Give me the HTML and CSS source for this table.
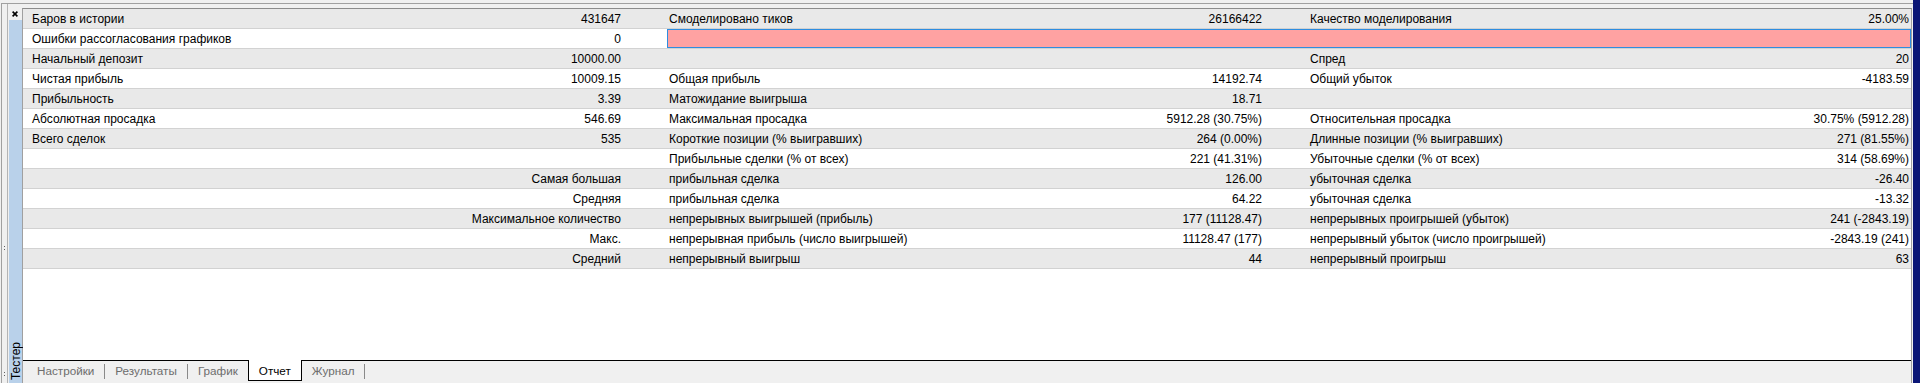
FILE: index.html
```html
<!DOCTYPE html>
<html lang="ru">
<head>
<meta charset="utf-8">
<title>Тестер — Отчет</title>
<link rel="stylesheet" href="styles.css">
</head>
<body>
<div class="app">
  <div class="panel">
    <div class="grip">
      <span class="dots dots-mid"></span>
      <span class="dots dots-low"></span>
    </div>
    <div class="side">
      <div class="close">
        <svg width="6" height="6" viewBox="0 0 6 6"><path d="M0.6 0.6L5.4 5.4M5.4 0.6L0.6 5.4" stroke="#000" stroke-width="1.6" fill="none"/></svg>
      </div>
      <div class="strip"><span class="strip-label">Тестер</span></div>
    </div>
    <div class="main">
      <div class="report">
        <div class="row alt">
          <span class="c a">Баров в истории</span><span class="c b">431647</span>
          <span class="c l2">Смоделировано тиков</span><span class="c v2">26166422</span>
          <span class="c l3">Качество моделирования</span><span class="c v3">25.00%</span>
        </div>
        <div class="row">
          <span class="c a">Ошибки рассогласования графиков</span><span class="c b">0</span>
          <span class="pink"></span>
        </div>
        <div class="row alt">
          <span class="c a">Начальный депозит</span><span class="c b">10000.00</span>
          <span class="c l3">Спред</span><span class="c v3">20</span>
        </div>
        <div class="row">
          <span class="c a">Чистая прибыль</span><span class="c b">10009.15</span>
          <span class="c l2">Общая прибыль</span><span class="c v2">14192.74</span>
          <span class="c l3">Общий убыток</span><span class="c v3">-4183.59</span>
        </div>
        <div class="row alt">
          <span class="c a">Прибыльность</span><span class="c b">3.39</span>
          <span class="c l2">Матожидание выигрыша</span><span class="c v2">18.71</span>
        </div>
        <div class="row">
          <span class="c a">Абсолютная просадка</span><span class="c b">546.69</span>
          <span class="c l2">Максимальная просадка</span><span class="c v2">5912.28 (30.75%)</span>
          <span class="c l3">Относительная просадка</span><span class="c v3">30.75% (5912.28)</span>
        </div>
        <div class="row alt">
          <span class="c a">Всего сделок</span><span class="c b">535</span>
          <span class="c l2">Короткие позиции (% выигравших)</span><span class="c v2">264 (0.00%)</span>
          <span class="c l3">Длинные позиции (% выигравших)</span><span class="c v3">271 (81.55%)</span>
        </div>
        <div class="row">
          <span class="c l2">Прибыльные сделки (% от всех)</span><span class="c v2">221 (41.31%)</span>
          <span class="c l3">Убыточные сделки (% от всех)</span><span class="c v3">314 (58.69%)</span>
        </div>
        <div class="row alt">
          <span class="c b">Самая большая</span>
          <span class="c l2">прибыльная сделка</span><span class="c v2">126.00</span>
          <span class="c l3">убыточная сделка</span><span class="c v3">-26.40</span>
        </div>
        <div class="row">
          <span class="c b">Средняя</span>
          <span class="c l2">прибыльная сделка</span><span class="c v2">64.22</span>
          <span class="c l3">убыточная сделка</span><span class="c v3">-13.32</span>
        </div>
        <div class="row alt">
          <span class="c b">Максимальное количество</span>
          <span class="c l2">непрерывных выигрышей (прибыль)</span><span class="c v2">177 (11128.47)</span>
          <span class="c l3">непрерывных проигрышей (убыток)</span><span class="c v3">241 (-2843.19)</span>
        </div>
        <div class="row">
          <span class="c b">Макс.</span>
          <span class="c l2">непрерывная прибыль (число выигрышей)</span><span class="c v2">11128.47 (177)</span>
          <span class="c l3">непрерывный убыток (число проигрышей)</span><span class="c v3">-2843.19 (241)</span>
        </div>
        <div class="row alt">
          <span class="c b">Средний</span>
          <span class="c l2">непрерывный выигрыш</span><span class="c v2">44</span>
          <span class="c l3">непрерывный проигрыш</span><span class="c v3">63</span>
        </div>
      </div>
      <div class="fill"></div>
      <div class="tabs">
        <span class="tab">Настройки</span><span class="sep"></span>
        <span class="tab">Результаты</span><span class="sep"></span>
        <span class="tab">График</span>
        <span class="tab active">Отчет</span>
        <span class="tab">Журнал</span><span class="sep"></span>
      </div>
    </div>
  </div>
  <div class="navy"></div>
</div>
</body>
</html>
```

FILE: styles.css
```css
* { box-sizing: border-box; margin: 0; padding: 0; }
html, body { width: 1920px; height: 383px; overflow: hidden; }
body {
  font-family: "Liberation Sans", Arial, sans-serif;
  font-size: 12px;
  color: #000;
  background: #f0f0f0;
}
.app { display: flex; height: 383px; }
.panel {
  flex: 1;
  display: flex;
  margin: 3px 0 0 1px;
  border-top: 1px solid #a0a0a0;
  border-left: 1px solid #a0a0a0;
  padding-right: 1px;
}
.grip {
  width: 6px;
  border-right: 1px solid #b4b4b4;
  display: flex;
  flex-direction: column;
  align-items: center;
}
.dots {
  width: 1px;
  height: 4px;
  border-top: 1px solid #606060;
  border-bottom: 1px solid #606060;
}
.dots-mid { margin-top: 242px; }
.dots-low { margin-top: 122px; }
.side {
  width: 14px;
  display: flex;
  flex-direction: column;
  padding-left: 1px;
}
.close {
  height: 16px;
  padding: 7px 0 0 3px;
  display: flex;
  align-items: flex-start;
}
.strip {
  flex: 1;
  background: #b9d1ea;
  display: flex;
  flex-direction: column;
  justify-content: flex-end;
  align-items: center;
  padding-bottom: 3px;
}
.strip-label {
  writing-mode: vertical-rl;
  transform: rotate(180deg);
  font-size: 12px;
  line-height: 12px;
  color: #000;
}
.main {
  flex: 1;
  min-width: 0;
  margin-top: 4px;
  border-top: 1px solid #8c8c8c;
  border-left: 1px solid #a0a0a0;
  border-right: 1px solid #a0a0a0;
  background: #fff;
  display: flex;
  flex-direction: column;
}
.report { display: flex; flex-direction: column; }
.row {
  display: grid;
  grid-template-columns: 370px 223px 44px 333px 264px 44px 342px 261px;
  height: 20px;
  padding-left: 7px;
  border-bottom: 1px solid #d2d2d2;
  line-height: 19px;
  background: #fff;
}
.row.alt { background: #e9e9e9; }
.c { padding: 1px 2px 0; line-height: 18px; white-space: nowrap; overflow: hidden; }
.a { grid-column: 1; }
.b { grid-column: 2; text-align: right; }
.l2 { grid-column: 4; }
.v2 { grid-column: 5; text-align: right; }
.l3 { grid-column: 7; }
.v3 { grid-column: 8; text-align: right; }
.pink {
  grid-column: 4 / 9;
  background: #ffa2a2;
  border: 1px solid #2e8de0;
}
.fill { flex: 1; }
.tabs {
  height: 23px;
  border-top: 1px solid #000;
  background: #f0f0f0;
  display: flex;
  align-items: flex-start;
  padding-left: 4px;
}
.tab {
  padding: 2px 10px 0;
  line-height: 15px;
  font-size: 11.7px;
  color: #6d6d6d;
  white-space: nowrap;
}
.tab.active {
  color: #000;
  background: #fff;
  margin-top: -1px;
  height: 21px;
  padding-top: 3px;
  border-left: 1px solid #000;
  border-right: 1px solid #000;
  border-bottom: 1px solid #000;
}
.sep {
  width: 1px;
  height: 15px;
  margin-top: 3px;
  background: #8a8a8a;
}
.navy {
  width: 7px;
  background: #0b1676;
}
```
